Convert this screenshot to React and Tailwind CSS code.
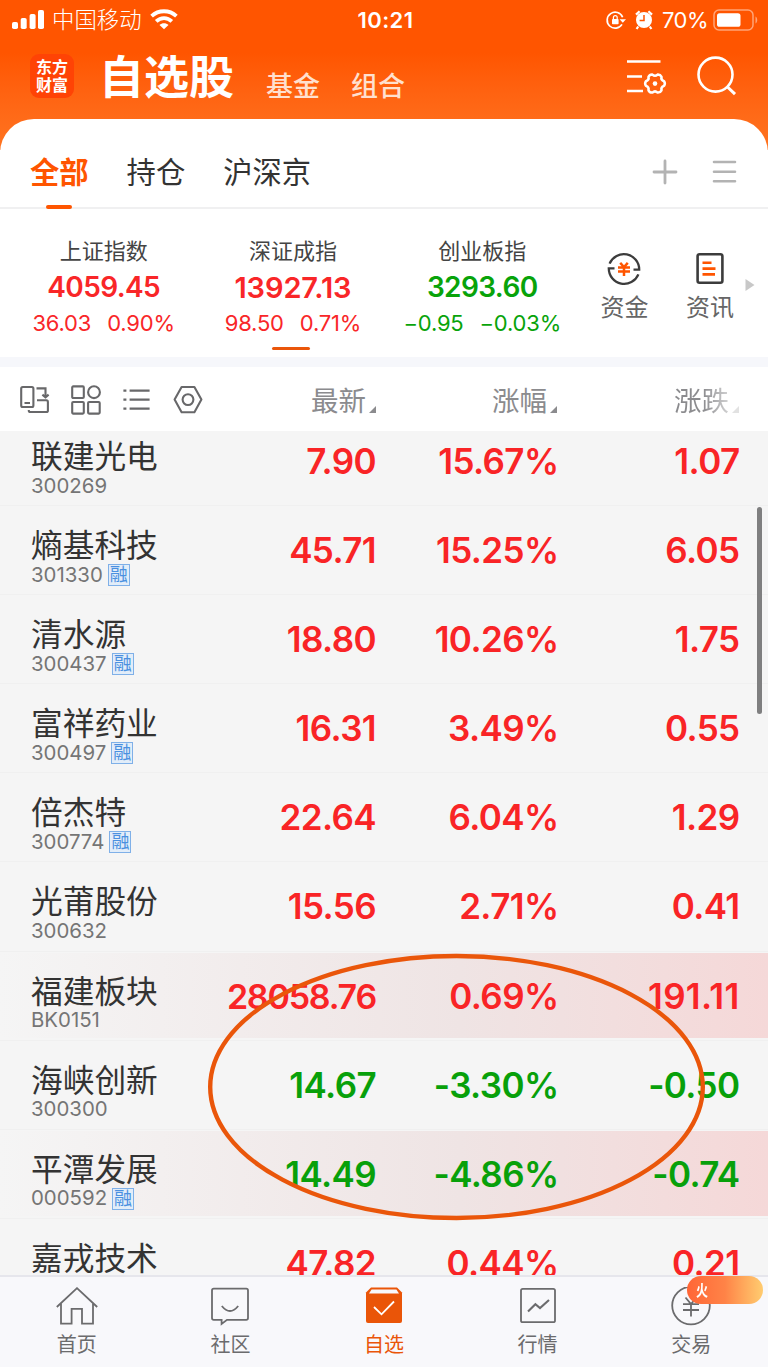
import React from "react";

const indexes = [
  { name: "上证指数", value: "4059.45", diff: "36.03", pct: "0.90%", up: true, size: "text-[28px] tracking-[-0.6px]" },
  { name: "深证成指", value: "13927.13", diff: "98.50", pct: "0.71%", up: true, size: "text-[29px] tracking-[-0.1px]" },
  { name: "创业板指", value: "3293.60", diff: "−0.95", pct: "−0.03%", up: false, size: "text-[28px] tracking-[-0.6px]" },
];

const stocks = [
  { name: "联建光电", code: "300269", price: "7.90", pct: "15.67%", diff: "1.07", up: true },
  { name: "熵基科技", code: "301330", margin: true, price: "45.71", pct: "15.25%", diff: "6.05", up: true },
  { name: "清水源", code: "300437", margin: true, price: "18.80", pct: "10.26%", diff: "1.75", up: true },
  { name: "富祥药业", code: "300497", margin: true, price: "16.31", pct: "3.49%", diff: "0.55", up: true },
  { name: "倍杰特", code: "300774", margin: true, price: "22.64", pct: "6.04%", diff: "1.29", up: true },
  { name: "光莆股份", code: "300632", price: "15.56", pct: "2.71%", diff: "0.41", up: true },
  { name: "福建板块", code: "BK0151", price: "28058.76", pct: "0.69%", diff: "191.11", up: true, flash: true },
  { name: "海峡创新", code: "300300", price: "14.67", pct: "-3.30%", diff: "-0.50", up: false },
  { name: "平潭发展", code: "000592", margin: true, price: "14.49", pct: "-4.86%", diff: "-0.74", up: false, flash: true },
  { name: "嘉戎技术", code: "301148", price: "47.82", pct: "0.44%", diff: "0.21", up: true },
];

const StatusBar = () => (
  <div className="flex h-10 items-center text-white">
    <div className="flex flex-1 items-center pl-3">
      <svg width="32" height="20" viewBox="0 0 32 20" fill="#fff">
        <rect x="0" y="12" width="6" height="7" rx="1.8" />
        <rect x="8.7" y="8" width="6" height="11" rx="1.8" />
        <rect x="17.6" y="4" width="6" height="15" rx="1.8" />
        <rect x="26" y="0" width="6" height="19" rx="1.8" />
      </svg>
      <span className="ml-2 text-[22.4px] leading-10 font-light">中国移动</span>
      <svg className="-mt-0.5 ml-2" width="28" height="21" viewBox="0 0 28 21" fill="none" stroke="#fff" strokeWidth="3.8">
        <path d="M1.6 7.2C8.6 0.6 19.4 0.6 26.4 7.2" />
        <path d="M6.2 12.4C10.8 8 17.2 8 21.8 12.4" />
        <path d="M14 20.3L9.5 16C12.1 13.6 15.9 13.6 18.5 16Z" fill="#fff" stroke="none" />
      </svg>
    </div>
    <span className="text-[22px] font-semibold tracking-[0.4px]">10:21</span>
    <div className="flex flex-1 items-center justify-end pr-[9px]">
      {/* Orientation lock */}
      <svg width="20" height="20" viewBox="0 0 20 20" fill="none" stroke="#fff" strokeWidth="1.7">
        <path d="M16 14.4A8 8 0 1 1 16.6 7.2" />
        <path d="M13.6 9.2H20L16.8 12.8Z" fill="#fff" stroke="none" />
        <rect x="6" y="9" width="6.6" height="5.2" rx="0.8" fill="#fff" stroke="none" />
        <path d="M7.4 9.4V7.6a1.9 1.9 0 0 1 3.8 0V9.4" strokeWidth="1.2" />
      </svg>
      {/* Alarm */}
      <svg className="ml-[9px]" width="18" height="20" viewBox="0 0 18 20" fill="none">
        <circle cx="9" cy="10" r="8" fill="#fff" />
        <path d="M1 4.6L4.6 1.2M17 4.6L13.4 1.2M3.2 16.5L1.6 19M14.8 16.5L16.4 19" stroke="#fff" strokeWidth="2.2" />
        <path d="M9 5V10.6H4.6" stroke="#ff5500" strokeWidth="1.5" />
      </svg>
      <span className="ml-[9px] text-[22px] tracking-[-0.5px]">70%</span>
      <svg className="ml-[5px]" width="46" height="22" viewBox="0 0 46 22" fill="none">
        <rect x="1" y="1" width="39" height="20" rx="5" stroke="#ffa477" strokeWidth="1.5" />
        <rect x="4" y="4.2" width="23.5" height="13.6" rx="2.6" fill="#fff" />
        <path d="M42.5 7.5C44.8 8.8 44.8 13.2 42.5 14.5Z" fill="#ffa477" />
      </svg>
    </div>
  </div>
);

const Header = () => (
  <div className="flex h-[79px] items-start pr-8 pl-[30px]">
    <div className="mt-3.5 flex h-11 w-11 flex-col items-center justify-center rounded-[9px] bg-[#ff4305] text-[16px] leading-[18px] font-bold text-white">
      <span>东方</span>
      <span>财富</span>
    </div>
    <span className="ml-[25px] text-[45px] leading-[75px] font-bold text-white">自选股</span>
    <span className="ml-8 text-[27px] leading-[93px] font-medium text-[#ffe0cf]">基金</span>
    <span className="ml-[31px] text-[27px] leading-[93px] font-medium text-[#ffe0cf]">组合</span>
    <svg className="mt-[19px] ml-auto" width="42" height="38" viewBox="0 0 42 38" fill="none" stroke="#fff" strokeWidth="2.5" strokeLinejoin="round">
      <path d="M1 2.4H34.5M1 17.4H16M1 32H17" />
      <g transform="translate(29 24.6)">
        <path d="M9.1 2.3Q5.7 3.3 6.5 6.8Q5.3 9.2 2.6 9Q0 6.6 -2.6 9Q-5.3 9.2 -6.5 6.8Q-5.7 3.3 -9.1 2.3Q-10.6 0 -9.1 -2.3Q-5.7 -3.3 -6.5 -6.8Q-5.3 -9.2 -2.6 -9Q0 -6.6 2.6 -9Q5.3 -9.2 6.5 -6.8Q5.7 -3.3 9.1 -2.3Q10.6 0 9.1 2.3Z" />
        <circle r="2.3" fill="#fff" stroke="none" />
      </g>
    </svg>
    <svg className="mt-4 -mr-0.5 ml-7" width="42" height="42" viewBox="0 0 42 42" fill="none" stroke="#fff" strokeWidth="2.6">
      <circle cx="19.5" cy="18.6" r="17" />
      <path d="M31 30.5L39 38.2" strokeWidth="3" />
    </svg>
  </div>
);

const Tabs = () => (
  <div className="flex h-[90px] items-start border-b-2 border-[#f0f0f1] pr-[31px] pl-[30px] text-[29.3px] leading-[107px] text-[#333]">
    <div className="relative font-bold text-[#ff5500]">
      全部
      <span className="absolute top-[86px] left-1/2 h-[4px] w-[26px] -translate-x-1/2 rounded-full bg-[#ff5500]" />
    </div>
    <span className="ml-[38px]">持仓</span>
    <span className="ml-[38px]">沪深京</span>
    <svg className="mt-10 ml-auto" width="26" height="26" viewBox="0 0 26 26" stroke="#b3b3b3" strokeWidth="2.8" strokeLinecap="round">
      <path d="M13 2V24M2 13H24" />
    </svg>
    <svg className="mt-10 ml-[33px]" width="26" height="26" viewBox="0 0 26 26" stroke="#b3b3b3" strokeWidth="2.6" strokeLinecap="round">
      <path d="M3 3H24M3 12.7H24M3 22.3H24" />
    </svg>
  </div>
);

const IndexBar = () => (
  <div className="flex h-[148px] pl-[9px]">
    {indexes.map((item, i) => (
      <div key={item.name} className={`flex w-[189.3px] flex-col items-center pt-6 ${item.up ? "text-[#f92628]" : "text-[#08a30a]"}`}>
        <span className="h-9 text-[22px] leading-[37px] text-[#444]">{item.name}</span>
        <span className={`h-9 leading-[37px] font-semibold ${item.size}`}>{item.value}</span>
        <div className="flex h-9 gap-4 text-[22px] leading-9 tracking-[-0.2px]">
          <span>{item.diff}</span>
          <span>{item.pct}</span>
        </div>
        {i === 1 && <span className="mt-[6px] -ml-1 h-[3px] w-[38px] rounded-full bg-[#ea560a]" />}
      </div>
    ))}
    <div className="ml-3 flex w-[71px] flex-col items-center pt-[42px] text-[24px] leading-[41px] text-[#666]">
      <svg width="36" height="36" viewBox="0 0 36 36" fill="none" stroke="#3c3c3c" strokeWidth="2.3">
        <path d="M3.6 12.6A15.4 15.4 0 0 1 33.2 18.6H27.5" />
        <path d="M32.4 23.4A15.4 15.4 0 0 1 2.8 17.4H8.5" />
        <path d="M14.2 11.8L18 16L21.8 11.8M12 16.4H24M12 20.4H24M18 16V25" stroke="#ff5500" strokeWidth="2.5" />
      </svg>
      <span>资金</span>
    </div>
    <div className="ml-[15px] flex w-[70px] flex-col items-center pt-[42px] text-[24px] leading-[41px] text-[#666]">
      <svg width="36" height="36" viewBox="0 0 36 36" fill="none" stroke="#3c3c3c" strokeWidth="2.6">
        <rect x="5.6" y="3.3" width="24.8" height="28.4" rx="2" />
        <path d="M10.5 11.8H19.5M10.5 17.6H23.5M10.5 23.4H23" stroke="#ff5500" />
      </svg>
      <span>资讯</span>
    </div>
    <svg className="mt-[70px]" width="10" height="12" viewBox="0 0 10 12" fill="#c8c8c8">
      <path d="M0.5 0L9.5 6L0.5 12Z" />
    </svg>
  </div>
);

const SortMark = () => (
  <svg className="mt-[39px] ml-[3px]" width="7" height="7" viewBox="0 0 7 7" fill="currentColor">
    <path d="M7 0V7H0Z" />
  </svg>
);

const Toolbar = () => (
  <div className="flex h-16 items-start pl-5 text-[27.5px] leading-[69px] text-[#8b8b8e]">
    <div className="flex w-[183px] shrink-0 justify-between pt-[17px]">
      <svg width="30" height="32" viewBox="0 0 30 32" fill="none" stroke="#68686a" strokeWidth="2.1">
        <rect x="1.2" y="3" width="12.2" height="20" rx="1.5" />
        <path d="M4.5 19H10M16.5 4.4H25.5V13M22.4 10.6L25.5 13.4L28.6 10.6M17 16.3H26.3A1.6 1.6 0 0 1 27.9 17.9V26.4A1.6 1.6 0 0 1 26.3 28H10.4A1.6 1.6 0 0 1 8.8 26.4V26" />
      </svg>
      <svg width="30" height="32" viewBox="0 0 30 32" fill="none" stroke="#68686a" strokeWidth="2.1">
        <rect x="1.2" y="2.4" width="11.6" height="11.6" rx="1" />
        <circle cx="23" cy="8.2" r="5.9" />
        <rect x="1.2" y="18" width="11.6" height="11.6" rx="1" />
        <rect x="17.1" y="18" width="11.6" height="11.6" rx="1" />
      </svg>
      <svg width="30" height="32" viewBox="0 0 30 32" fill="none" stroke="#68686a" strokeWidth="2.4">
        <path d="M7.6 6.6H27.6M7.6 15.6H27.6M7.6 24.6H27.6M1.4 6.6H4.4M1.4 15.6H4.4M1.4 24.6H4.4" />
      </svg>
      <svg width="30" height="32" viewBox="0 0 30 32" fill="none" stroke="#68686a" strokeWidth="2.1" strokeLinejoin="round">
        <path d="M8.6 3H21.4L28.4 15.6L21.4 28.2H8.6L1.6 15.6Z" />
        <circle cx="15" cy="15.6" r="5.4" />
      </svg>
    </div>
    <div className="flex w-[173px] justify-end">最新<SortMark /></div>
    <div className="flex w-[181px] justify-end">涨幅<SortMark /></div>
    <div className="flex w-[182px] justify-end bg-gradient-to-r from-[#8b8b8e] from-80% to-[#f0f0f0] bg-clip-text text-transparent">
      涨跌
      <span className="flex text-[#e2e2e2]"><SortMark /></span>
    </div>
  </div>
);

const StockRow = ({ stock }) => (
  <div className="flex h-[89.1px] flex-col border-t border-[#f0f0f0] pt-px">
    <div className={`flex h-[85px] shrink-0 pl-[31px] ${stock.flash ? "bg-gradient-to-r from-[#f5f5f5] via-[#efe4e4] via-60% to-[#f5d8d8]" : ""}`}>
      <div className="w-[165px] pt-[20px] whitespace-nowrap">
        <div className="h-[35px] text-[31.7px] leading-[37px] text-[#333]">{stock.name}</div>
        <div className="flex h-[26px] items-center text-[20.4px] text-[#757575]">
          {stock.code}
          {stock.margin && (
            <span className="ml-[5px] flex h-[22px] w-[22px] items-center justify-center border border-[#7fb0e8] bg-[#e2edf9] text-[18px] leading-[20px] text-[#4a90e0]">
              融
            </span>
          )}
        </div>
      </div>
      <div className={`flex pt-px text-[35px] leading-[85px] font-semibold tracking-[-0.6px] ${stock.up ? "text-[#f92426]" : "text-[#08a00a]"}`}>
        <span className={`w-[180px] text-right ${stock.price.length > 6 ? "text-[34px] tracking-[-1.2px]" : ""}`}>{stock.price}</span>
        <span className="w-[182.5px] text-right">{stock.pct}</span>
        <span className={`w-[181px] text-right ${stock.diff.length > 5 ? "tracking-[0.3px]" : ""}`}>{stock.diff}</span>
      </div>
    </div>
  </div>
);

const NavItem = ({ label, active, children }) => (
  <div className={`relative flex flex-1 flex-col items-center pt-2.5 text-[20px] leading-[37px] ${active ? "text-[#ea5508]" : "text-[#6b6b6d]"}`}>
    <svg width="42" height="40" viewBox="0 0 42 40" fill="none" stroke="currentColor" strokeWidth="1.8">
      {children}
    </svg>
    <span>{label}</span>
  </div>
);

const BottomNav = () => (
  <div className="flex h-[92px] border-t-2 border-[#e6e6ec] bg-[#f8f8fb]">
    <NavItem label="首页">
      <path d="M0.8 20L21 1.2L41.2 20M5 16.5V36.6H15.6V21.8H26V36.6H37V16.5" />
    </NavItem>
    <NavItem label="社区">
      <path d="M4.8 1.6H37.2Q39 1.6 39 3.4V31Q39 32.8 37.2 32.8H18L12.6 37V32.8H4.8Q3 32.8 3 31V3.4Q3 1.6 4.8 1.6Z" />
      <path d="M12.8 19Q21 29 29.2 19" />
    </NavItem>
    <NavItem label="自选" active>
      <path d="M8 0.6H34L39 5.6V34Q39 36 37 36H5Q3 36 3 34V5.6Z" fill="currentColor" stroke="none" />
      <path d="M8.6 2.6H33.4L36 6.4H6Z" fill="#f8f8fb" stroke="none" />
      <path d="M11 20L18.5 27.3L31 14.5" stroke="#fff" />
    </NavItem>
    <NavItem label="行情">
      <rect x="4" y="1.8" width="34" height="33.4" rx="1.8" />
      <path d="M11 24.6L18.4 17.2L23 21L32 13" strokeWidth="2.1" />
    </NavItem>
    <NavItem label="交易">
      <circle cx="21" cy="18.6" r="18.8" />
      <path d="M15.5 10.5L21 17L26.5 10.5M13 17.2H29M13 23H29M21 17V29.5" />
    </NavItem>
  </div>
);

const App = () => {
  return (
    <div className="relative flex h-[1367px] w-[768px] flex-col overflow-hidden bg-white font-['Inter','Noto_Sans_CJK_SC',sans-serif]">
      <div className="h-[150px] bg-gradient-to-b from-[#ff5500] from-35% to-[#ff7420]">
        <StatusBar />
        <Header />
      </div>

      <div className="-mt-[31px] rounded-t-[34px] bg-white">
        <Tabs />
        <IndexBar />
        <div className="h-2.5 bg-[#f6f7fb]" />
        <Toolbar />
      </div>

      {/* Watchlist */}
      <div className="relative h-[844px] overflow-hidden bg-[#f5f5f5]">
        <div className="-mt-[15px]">
          {stocks.map((stock) => (
            <StockRow key={stock.name} stock={stock} />
          ))}
        </div>
        <div className="absolute top-[76px] right-[6px] h-[207px] w-[5px] rounded-full bg-[#7f7f80]" />
      </div>

      <BottomNav />

      {/* Promo badge over the trade tab */}
      <div className="absolute top-[1276px] right-[5px] flex h-[28px] w-[76px] items-center rounded-full bg-gradient-to-r from-[#ff6536] via-[#ff8347] to-[#ffcc70] pl-[9px] text-[16px] leading-7 font-bold text-white">
        <span className="origin-left scale-x-75">火</span>
      </div>

      {/* Marker ring */}
      <svg className="absolute top-[950px] left-[205px]" width="504" height="274" viewBox="0 0 504 274" fill="none">
        <ellipse cx="251.5" cy="137" rx="246.3" ry="131" stroke="#ea560a" strokeWidth="4.4" />
      </svg>
    </div>
  );
};

export default App;
